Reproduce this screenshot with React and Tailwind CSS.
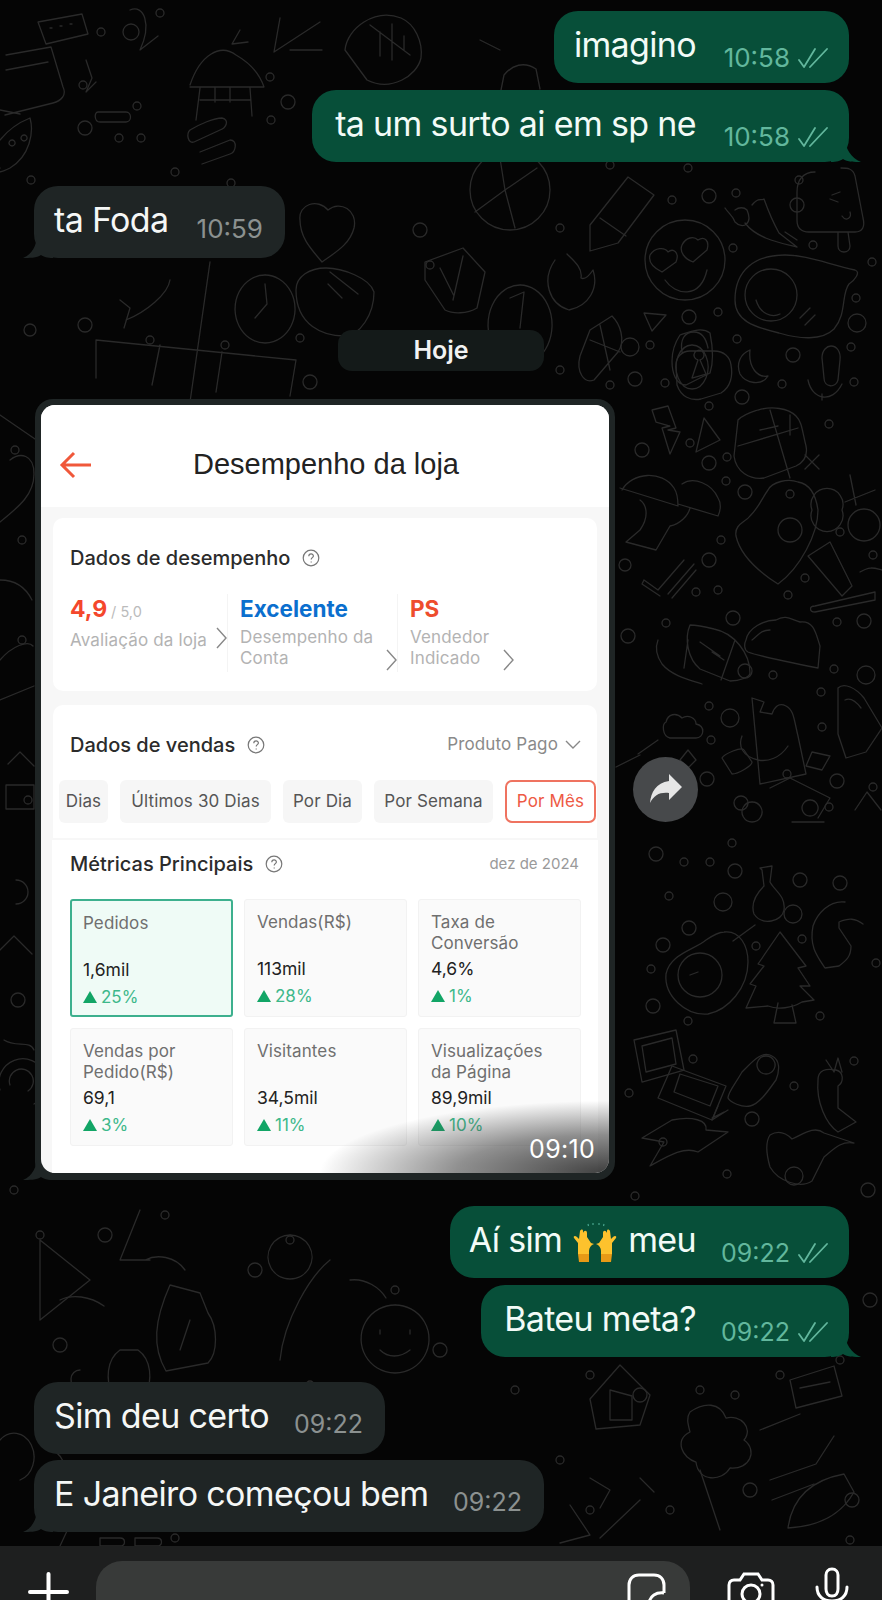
import React from 'react';

const dots = [
  [672,200,4],[709,196,7],[736,193,4],[797,205,7],[799,180,4],[813,245,4],[733,248,4],[872,262,4],[856,298,4],[857,323,9],[718,312,4],[689,317,7],[737,339,4],[793,355,7],[851,347,4],[782,384,4],[854,382,4],[742,397,7],[709,406,4],[630,347,9],[635,379,7],[665,383,4],[829,424,4],[690,443,4],[642,450,7],[727,457,4],[709,463,7],
  [726,481,4],[745,492,7],[790,494,4],[721,540,4],[709,560,7],[625,565,6],[840,532,4],[873,555,4],[805,578,4],[788,595,4],[696,592,4],[718,590,4],[733,618,7],[666,623,4],[628,636,7],[837,622,4],[864,621,7],[745,671,7],[773,675,4],[834,669,4],[866,675,9],[821,692,4],[709,706,4],[730,718,9],[822,727,4],[711,740,4],[787,774,4],[837,781,7],[873,787,4],[707,779,7],[741,803,7],[829,807,4],
  [732,843,4],[656,854,7],[684,862,4],[710,862,4],[735,871,7],[800,880,7],[840,883,7],[669,896,4],[723,902,9],[793,914,9],[689,928,7],[802,939,4],[663,945,7],[756,946,4],[651,969,4],[876,963,4],[653,1006,7],[688,1021,4],[820,1016,4],[693,1059,4],[854,1061,4],[794,1086,4],[752,1119,7],[629,1093,4],[663,1142,4],[727,1174,4],[794,1176,9],[868,1190,7],[635,1196,4],
  [101,32,4],[131,32,8],[160,13,4],[83,85,4],[137,106,4],[85,128,7],[119,138,4],[141,138,4],[270,77,4],[288,102,7],[271,120,4],[175,172,4],[31,180,4],[231,183,4],[420,230,7],[430,265,4],[560,228,4],[610,165,4],[688,168,4],[30,330,6],[85,325,7],[150,340,4],[225,345,4],[300,338,4],[310,382,7],[560,370,4],[650,345,4],[610,385,4],
  [15,450,4],[22,540,4],[22,640,4],[28,800,4],[18,1000,7],[14,1190,4],[105,1235,7],[40,1235,4],[165,1215,4],[255,1270,7],[290,1240,4],[60,1345,7],[310,1385,4],[395,1290,4],[440,1350,7],[515,1390,4],[590,1375,4],[640,1395,7],[700,1390,4],[735,1395,4],[780,1375,4],[840,1360,4],[870,1300,7],[560,1460,4],[590,1510,4],[670,1510,4],[750,1490,7],[852,1500,7],[850,1540,4],[175,1538,4]
];

// background wallpaper doodles, roughly where they sit in the picture
const doodles = [
  // right column
  'M645 260a40 40 0 1 0 80 0a40 40 0 1 0 -80 0M650 255c5-8 15-8 18-3c5-4 12 0 8 10l-14 10c-8-4-14-10-12-17M682 245c4-8 12-9 16-5c6-4 12 0 9 10l-14 12c-8-3-14-10-11-17M665 280c10 15 35 20 42-10',
  'M815 172c-12 0-18 8-18 20v28c0 8 4 12 12 12h46c8 0 10-6 8-14l-8-42c-2-8-8-8-14-8M838 232v14c0 8 12 8 12 0l-2-14M832 195l8-3M838 202l-8-3M842 216c4 6 10 2 8-4',
  'M725 208c4 6 8 8 10 14c8 8 18 2 12-12c-3-3-8-3-12 0M752 205c6-8 8-4 12-6c5 14 10 25 15 34l18 14c-16-4-40-8-52-24M785 232l12 8',
  'M735 300c0-30 20-45 50-45c20 0 40 8 70 15c6 2 0 10-6 14c-8 10-2 30-15 45c-12 12-35 10-55 4c-25-6-44-12-44-33M745 295a26 26 0 1 0 52 0a26 26 0 1 0 -52 0M756 300c4 14 16 18 24 14M800 318l10-10M805 325l10-10',
  'M676 365c0-8 6-14 14-14h24c10 0 16 6 17 14c2 10 0 22-10 28l-20 6c-10 2-20-2-24-14zM682 352c-2-12 2-20 12-20c8 0 12 6 14 16M698 360a5 5 0 1 1 2 0l6 14l-14 4z',
  'M750 350c-10 4-14 14-10 24c6 10 22 12 28 2c-10 2-20-8-18-26',
  'M822 358c0-8 5-12 9-12c6 0 10 6 9 14l-2 20c-2 8-14 8-14-2zM808 380c4 20 24 24 34 4M822 400v-6',
  'M738 420c6-6 14-8 20-10c14-4 30-2 38 6c6 6 6 14 10 30c2 10-2 16-10 20l-32 12c-14 2-28-6-30-22zM770 410l20 68M738 446l60-18M760 430l18-4M790 415v20M805 455l14 14M805 469l14-14',
  'M652 410l16-4l8 22l-8 2l12 2l-10 22l-8-26l8-2l-14-4zM704 418l-8 34l24-12zM644 313l22 2l-14 16z',
  // middle right
  'M622 490c10-18 40-20 52-2c4 6 4 12 4 18l-58-18M682 484c12-8 30 0 36 14c4 6 2 14 0 18l-40-12M640 500c6 4 10 16 0 30l-14 12l30 8l14-24c10-2 18-10 20-18',
  'M768 490c4-8 20-12 30-8c12 2 18 14 20 28c0 24-18 58-40 74c-22-14-38-30-42-48c-2-12 10-14 14-20c10-10 12-18 18-26zM778 530a12 12 0 1 0 24 0a12 12 0 1 0 -24 0',
  'M842 510a16 16 0 1 0 -30 0a16 16 0 1 0 30 0M845 502l30-12M880 525a16 16 0 1 0 -32 0a16 16 0 1 0 32 0M850 475l6 30',
  'M808 556l22-14l22 44l-10 10zM815 606l60-14v8l-60 12c-6 0-6-6 0-6zM860 572c10-6 14-4 22-2',
  'M644 580l14 10l26-30M668 594l26-30M644 580l-2 4l18 12M672 598l24-28',
  'M690 625c-6 14-2 34 10 44l30 12c10 0 20-4 20-8c0-20-16-40-36-44c-8-2-20-4-24-4zM688 640l-4 28M712 652l12 8M700 642l20 14M735 640l-14 40M658 640c-4 10 0 18 4 24c10 12 28 16 40 20',
  'M746 640c2-12 18-20 30-20c10-6 16 0 24 2c14-2 16 12 20 24l-2 22c-30-6-60-12-70-16c-4-2-4-8-2-12zM752 640c6-4 8-10 18-10',
  'M752 698l12 4l-4 10l12 2c2-6 6-12 14-8c8 4 8 14 12 30l8 38l-46 10zM742 736c-4 10 0 20 16 24c10 2 22-2 30-14',
  'M838 688c6-6 18 0 26 10l18 30l-16 24l-20 6l-8-24zM845 700c4-2 10 0 16 8',
  'M666 722c2-8 10-10 16-4c6-4 14 0 14 6c10 2 8 14 0 14h-26c-8-2-8-14-4-16z',
  'M640 755l-24 12M658 740l-20 14M688 750l8 10l-8 8l-8-8z',
  'M722 758c2-4 20-12 22-8l8 12c0 4-14 12-20 12zM812 752l18 4l-8 14l-16-4zM792 822h32M770 788l20-10l40 20l-12 20M752 802a10 10 0 1 0 0.1 0M810 800a8 8 0 1 0 0.1 0',
  'M855 810l12-18l14 18',
  // lower right
  'M760 868l12-2l-2 16c4 8 16 14 14 28c-2 12-22 16-30 4c-4-12 4-22 10-28l-2-16zM755 925l-22 16',
  'M724 932c16-2 24 14 24 30c0 26-20 48-40 52c-22 2-44-18-42-40c4-20 28-24 40-34c6-4 12-8 18-8zM678 975a22 22 0 1 0 44 0a22 22 0 1 0 -44 0M690 975l8-3',
  'M780 932l26 34l-8 2l12 18l-10 0l14 14l-12 2c-10 6-24 8-34 4l-22 2l10-22l-6-2l14-18l-6-2zM792 1005l4 18h-22l4-20',
  'M845 902c-16-2-28 12-32 24c-4 20 4 30 12 42l14-2c8-6 12-10 12-20l-12-18l0-6c10-4 16-4 24 2',
  'M634 1040l42-10l8 40l-42 12zM642 1046l30-8l4 26l-30 8z',
  'M672 1066l54 20l-14 34l-54-22zM680 1074l38 12l-8 20l-36-14z',
  'M742 1072c-8 14-14 20-14 26c2 4 14 10 22 8c10-2 20-18 26-26c4-10 4-20-4-24c-10-6-20 6-30 16zM766 1056a9 9 0 1 0 0.1 0M728 1110l-16 10l6-14M712 1118l12-6',
  'M826 1060l8 12l4-14l4 14M818 1080c0-10 8-12 18-10c8 2 8 12 2 16l0 22l18 14l-18 10c-12-8-22-30-20-52z',
  'M770 1135c10-6 18 0 22 4c10-4 22-14 32-6l30 10c-14-2-20 6-30 14l-12 24c-12 8-34 0-42-14c-4-14-4-26 0-32z',
  'M672 1120c20-4 36 0 34 10l22 2l-30 20c-14-6-30 4-48 14l14-24l-22-4z',
  // left edge, next to the picture
  'M0 415l35 24M10 460c10-8 24-6 24 14c0 20-14 32-34 48M0 580c12 0 24 4 32 20M0 660c12-14 28-20 33-14M0 700l34-14M8 764l12-12l14 14M6 785h28v24h-28zM16 880a12 12 0 1 1 0 24M0 950l14-14l18 18M4 1040c12 8 26 0 30 10M0 1090a24 24 0 1 1 34 14M10 1085a12 12 0 1 1 18 6',
  // top band
  'M38 22l44-8l6 20l-42 10zM50 28h2M60 26h2M70 24h2',
  'M6 55l45-8l12 40c4 8-2 14-10 16l-48 12M0 110l20 4M6 70l42-8',
  'M130 10c14-6 22 14 10 40l18-14M86 60l6 18l-6 14l10-10',
  'M190 85c10-30 30-42 46-30c14 8 24 20 28 32l-74 0M200 88l-4 32M250 88l2 28M200 100h50M215 88v14M230 88v14M240 30l-8 14l16-2',
  'M0 140c8-10 20-18 30-22c4 14 0 38-20 50c-8 4-14 6-10 0M12 140a3 3 0 1 0 .1 0M24 135a3 3 0 1 0 .1 0',
  'M98 112h28c6 0 6 10 0 10h-26c-6 0-6-10-2-10zM190 130c10-6 24-12 32-12c8 2 4 10-2 12l-26 12c-6 2-8-8-4-12zM200 152l30-12c8 0 6 12 0 14l-28 10',
  'M345 50c2-22 30-42 56-32c14 6 22 24 20 40c-4 18-30 34-54 22zM370 25l40 30M380 32v24M392 24v36M404 36v14',
  'M480 40l20 10M280 18l-6 34l46-30M290 50h32M500 95l4-20c8-10 20-14 32-6l4 20',
  'M470 190a40 40 0 1 0 80 0a40 40 0 1 0 -80 0M505 190l-6-38M505 190l-30 22M505 190l32-22M505 190l10 38',
  'M590 225l38-48l26 18l-36 48l-28 8zM600 218l26 18',
  'M300 220c-2-16 18-22 28-10c12-10 30 0 26 18c-4 16-18 24-32 34c-10-12-22-24-22-42z',
  'M296 290c0-14 14-22 30-22c16 0 44 10 48 24c0 22-14 44-30 44c-20 0-48-10-48-46zM330 272l28 22M328 284l14 14',
  'M425 262l38-14l22 24l-8 36c-10 6-24 6-32 2l-20-30zM440 268l14 28M463 256l-10 44',
  'M555 260c-14 20-6 44 14 50c20-4 30-22 24-40c-4 6-8 10-12 8c2-10-8-18-14-24',
  'M520 285a32 40 0 1 0 .1 0M510 298l14-6l-4 36',
  'M265 275a30 34 0 1 0 .1 0M255 318l12-14l-2-20',
  'M96 340l200 20l-6 36M96 340l0 38M160 345l-8 40M222 352l-6 40M120 300l10 8l-6 20M126 320c20-8 42-26 44-40M210 262l-20 140',
  'M590 330l22-14c8 8 14 24 6 36l-24 28c-10 4-18-8-14-24zM590 340l30 12M600 325l10 45',
  'M680 335c12-4 22-8 30-2c2 10 4 28 0 40l-24 12c-10 0-14-12-14-24c0-10 4-20 8-26zM692 345a16 22 0 1 0 .1 0',
  // bottom band
  'M40 1240l50 40l-50 40zM40 1240l0 70M140 1210l-20 50l30 0M145 1260c12-6 30-4 40 10',
  'M170 1285l30 8l8 20c10 14 10 40 0 50l-42 8c-14-24-12-50 4-86zM190 1320l-10 30',
  'M290 1235a22 22 0 1 0 .1 0M330 1260c-20 16-46 60-50 100M350 1280c16-2 30 8 36 18',
  'M395 1305a34 34 0 1 0 .1 0M380 1330l0 4M410 1330l0 4M380 1350c8 8 20 8 30 0',
  'M120 1350c-14 10-14 30-8 44h34c6-14 6-34-8-44zM80 1370c-10 0-14 16 0 20M60 1300c12-6 30-4 44 6',
  'M620 1365l30 30l-10 30l-44 4l-6-30zM610 1390v30h22v-24z',
  'M790 1380l44-14l8 30l-46 12zM800 1388l30-6',
  'M690 1412c14-10 30-10 36 6c14-4 28 10 18 22c14 10 6 30-14 28c-8 14-32 14-34-6c-14-4-22-22-6-30c-2-8-4-14 0-20z',
  'M760 1430l40-16M770 1480l46-16l18-28M772 1500l42-16',
  'M788 1528c4-30 24-48 56-54l10 18c-10 18-30 34-66 36zM640 1500l-40 38M700 1470l20 60M570 1505l20 30l-30 8',
  'M640 1478l14 14M590 1478l20 12l-10 18',
  'M100 1538h20c6 0 6 8 0 8h-20zM135 1538h22c6 0 6 8 0 8h-22zM60 1546l14-30c10-6 22 0 22 8M50 1450c10 2 18 14 14 30M0 1440a20 24 0 1 1 20 40'
];

const WallPaper = () => (
  <svg className="absolute inset-0" width="882" height="1600" viewBox="0 0 882 1600" fill="none" stroke="#2a2a2a" strokeWidth="1.3" strokeLinecap="round" strokeLinejoin="round">
    {dots.map((d, i) => <circle key={i} cx={d[0]} cy={d[1]} r={d[2]} />)}
    {doodles.map((d, i) => <path key={i} d={d} />)}
  </svg>
);

const Ticks = () => (
  <svg width="30" height="20" viewBox="0 0 30 20" fill="none" stroke="#62b79d" strokeWidth="1.8" strokeLinecap="round" strokeLinejoin="round" className="shrink-0">
    <path d="M1 12l5 7L17 1M12 19L29 1" />
  </svg>
);

const Hands = () => (
  <svg width="44" height="42" viewBox="0 0 44 42" className="shrink-0 mx-[11px] mb-[-3px]">
    <path d="M15 3l.5 2M20 2v2M26 2v2M31 3l-.5 2" stroke="#4aa58e" strokeWidth="1.2" fill="none" />
    <path d="M7 10c1-2 3-2 3 0l0 2c1-3 4-3 4 0v4l4 6l3 1c-3 1-5 4-5 7v3H5L5 22l-4-5c-1-2 1-3 3-1l2 2z" fill="#fdc22d" />
    <path d="M37 10c-1-2-3-2-3 0v2c-1-3-4-3-4 0v4l-4 6l-3 1c3 1 5 4 5 7v3h11l0-11l4-5c1-2-1-3-3-1l-2 2z" fill="#fdc22d" />
    <path d="M5 33h11v8H6zM39 33H28v8h10z" fill="#e89a16" />
  </svg>
);

const Sent = ({ width, time, tail, children, timeSize = 'text-[26px]' }) => (
  <div className={`relative self-end mr-[33px] h-[72px] bg-[#074f39] rounded-[24px] flex items-center pl-[22px] pr-[21px] ${width}`}>
    <div className="flex-1 min-w-0 flex items-center justify-end pb-[4px] text-[34px] text-[#f2fbf7] leading-none tracking-[-0.65px] whitespace-nowrap">{children}</div>
    <div className={`ml-[28px] mt-[22px] w-[104px] shrink-0 flex items-center justify-end gap-[8px] leading-none text-[#62b79d] ${timeSize}`}>
      <span>{time}</span>
      <Ticks />
    </div>
    {tail && (
      <svg width="30" height="24" viewBox="0 0 30 24" className="absolute right-[-12px] bottom-0" fill="#074f39">
        <path d="M0 24V0h14c0 10 6 20 16 24c-6 0-14 0-18-3c-3 2-6 3-12 3z" />
      </svg>
    )}
  </div>
);

const Received = ({ width, time, tail, children, timeSize = 'text-[26px]' }) => (
  <div className={`relative self-start ml-[34px] h-[72px] bg-[#1f2525] rounded-[24px] flex items-center pl-[20px] ${width}`}>
    <div className="pb-[4px] text-[34px] text-[#f5f7f6] leading-none tracking-[-0.65px] whitespace-nowrap">{children}</div>
    <div className={`absolute right-[22px] top-[30px] leading-none text-[#8b9190] ${timeSize}`}>{time}</div>
    {tail && (
      <svg width="30" height="24" viewBox="0 0 30 24" className="absolute left-[-11px] bottom-0" fill="#1f2525">
        <path d="M30 24V0H14c0 10-4 20-14 24c6 0 14 0 18-3c3 2 6 3 12 3z" />
      </svg>
    )}
  </div>
);

const Help = () => (
  <svg width="18" height="18" viewBox="0 0 18 18" fill="none" stroke="#777" strokeWidth="1.2" className="shrink-0">
    <circle cx="9" cy="9" r="7.8" />
    <path d="M6.8 7.2c0-3 4.6-3 4.6-.2c0 1.6-2.2 1.7-2.2 3.4M9.2 12.6v.8" />
  </svg>
);

const Chevron = ({ className }) => (
  <svg width="11" height="22" viewBox="0 0 11 22" fill="none" stroke="#888" strokeWidth="1.4" className={className}>
    <path d="M1 1l9 10L1 21" />
  </svg>
);

const metrics = [
  { label: 'Pedidos', value: '1,6mil', delta: '25%', active: true },
  { label: 'Vendas(R$)', value: '113mil', delta: '28%' },
  { label: 'Taxa de Conversão', value: '4,6%', delta: '1%' },
  { label: 'Vendas por Pedido(R$)', value: '69,1', delta: '3%' },
  { label: 'Visitantes', value: '34,5mil', delta: '11%' },
  { label: 'Visualizações da Página', value: '89,9mil', delta: '10%' }
];

const tabs = [
  { label: 'Dias', w: 'w-[49px]' },
  { label: 'Últimos 30 Dias', w: 'w-[151px]' },
  { label: 'Por Dia', w: 'w-[79px]' },
  { label: 'Por Semana', w: 'w-[119px]' }
];

const StorePanel = () => (
  <div className="relative w-[568px] h-[768px] rounded-[14px] overflow-hidden bg-[#f7f7f7]">
    {/* header */}
    <div className="relative h-[102px] bg-white flex items-center justify-center pt-[18px]">
      <svg width="34" height="28" viewBox="0 0 34 28" fill="none" stroke="#f0583a" strokeWidth="3" className="absolute left-[18px] top-[46px]">
        <path d="M32 14H3M15 2L3 14l12 12" />
      </svg>
      <span className="font-['Liberation_Sans',sans-serif] text-[29px] text-[#222] pl-[2px]">Desempenho da loja</span>
    </div>

    {/* dados de desempenho */}
    <div className="mx-[12px] mt-[11px] h-[173px] bg-white rounded-[10px] pl-[17px] pt-[28px]">
      <div className="flex items-center gap-[12px] h-[24px]">
        <span className="text-[20px] font-medium text-[#2b2b2b]">Dados de desempenho</span>
        <Help />
      </div>
      <div className="flex mt-[24px]">
        <div className="relative w-[158px] h-[78px] border-r border-[#f4f4f4]">
          <div className="leading-[30px]"><span className="text-[23px] font-bold text-[#f4472c]">4,9</span><span className="text-[14.5px] text-[#bbb] ml-[4px]">/ 5,0</span></div>
          <div className="text-[17px] leading-[21px] text-[#b3b3b3] mt-[3px] tracking-[0.15px]">Avaliação da loja</div>
          <Chevron className="absolute left-[146px] top-[33px]" />
        </div>
        <div className="relative w-[170px] h-[78px] pl-[12px] border-r border-[#f4f4f4]">
          <div className="leading-[30px] text-[22.5px] font-bold text-[#0b6fce]">Excelente</div>
          <div className="text-[17px] leading-[21px] text-[#b3b3b3] mt-[3px] tracking-[0.15px]">Desempenho da<br />Conta</div>
          <Chevron className="absolute left-[158px] top-[55px]" />
        </div>
        <div className="relative flex-1 h-[78px] pl-[12px]">
          <div className="leading-[30px] text-[22.5px] font-bold text-[#ee4d2d]">PS</div>
          <div className="text-[17px] leading-[21px] text-[#b3b3b3] mt-[3px] tracking-[0.15px]">Vendedor<br />Indicado</div>
          <Chevron className="absolute left-[105px] top-[55px]" />
        </div>
      </div>
    </div>

    {/* dados de vendas */}
    <div className="mx-[12px] mt-[14px] bg-white rounded-t-[10px] h-[133px]">
      <div className="flex items-center pl-[17px] pr-[16px] pt-[28px] h-[52px]">
        <span className="text-[20px] font-medium text-[#2b2b2b]">Dados de vendas</span>
        <span className="ml-[12px]"><Help /></span>
        <span className="ml-auto text-[17px] text-[#8a8a8a] tracking-[0.15px]">Produto Pago</span>
        <svg width="16" height="10" viewBox="0 0 16 10" fill="none" stroke="#888" strokeWidth="1.4" className="ml-[7px]"><path d="M1 1l7 7 7-7" /></svg>
      </div>
      <div className="flex gap-[12px] mt-[23px] pl-[6px]">
        {tabs.map(t => (
          <div key={t.label} className={`h-[43px] rounded-[6px] bg-[#f6f6f6] flex items-center justify-center text-[17px] text-[#555] tracking-[0.15px] whitespace-nowrap ${t.w}`}>{t.label}</div>
        ))}
        <div className="w-[91px] h-[43px] rounded-[7px] border-2 border-[#ef7360] flex items-center justify-center text-[17px] text-[#ee5a45] tracking-[0.15px] whitespace-nowrap">Por Mês</div>
      </div>
    </div>

    {/* metricas principais */}
    <div className="mx-[11px] mt-[2px] bg-white h-[340px] pl-[18px] pr-[17px] pt-[12px]">
      <div className="flex items-center h-[24px]">
        <span className="text-[20px] font-medium text-[#2b2b2b]">Métricas Principais</span>
        <span className="ml-[12px]"><Help /></span>
        <span className="ml-auto mr-[2px] text-[15px] text-[#9a9a9a]">dez de 2024</span>
      </div>
      <div className="grid grid-cols-3 gap-[11px] mt-[23px]">
        {metrics.map(m => (
          <div key={m.label} className={`h-[118px] pt-[12px] rounded-[3px] flex flex-col ${m.active ? 'px-[11px] bg-[#effbf6] border-2 border-[#3db08e]' : 'px-[12px] bg-[#fafafa] border border-[#f2f2f2]'}`}>
            <div className="h-[44px] pr-[8px] text-[17px] leading-[21px] text-[#6f6f6f] tracking-[0.1px]">{m.label}</div>
            <div className="text-[17.5px] leading-[24px] text-[#222] mt-[1px]">{m.value}</div>
            <div className="flex items-center gap-[4px] text-[17px] leading-[24px] text-[#3db88a] mt-[3px]">
              <span className="w-0 h-0 border-l-[7px] border-r-[7px] border-b-[12px] border-l-transparent border-r-transparent border-b-[#12a566]" />
              {m.delta}
            </div>
          </div>
        ))}
      </div>
    </div>

    {/* shadow behind the time */}
    <div className="absolute right-0 bottom-0 w-[340px] h-[85px] bg-[radial-gradient(ellipse_100%_100%_at_100%_100%,rgba(30,30,30,0.85),rgba(70,70,70,0.6)_45%,rgba(255,255,255,0)_85%)]" />
    <span className="absolute right-[14px] bottom-[11px] text-[25px] leading-none text-white tracking-[0.3px]">09:10</span>
  </div>
);

export default function App() {
  return (
    <div className="relative w-[882px] h-[1600px] overflow-hidden bg-[#050505] font-['Inter',sans-serif]">
      <WallPaper />
      <div className="relative flex flex-col h-full pt-[11px]">
        <Sent width="w-[295px]" time="10:58">imagino</Sent>
        <div className="h-[7px] shrink-0" />
        <Sent width="w-[537px]" time="10:58" tail>ta um surto ai em sp ne</Sent>
        <div className="h-[24px] shrink-0" />
        <Received width="w-[251px]" time="10:59" tail>ta Foda</Received>

        <div className="self-start ml-[338px] mt-[72px] w-[206px] h-[41px] rounded-[14px] bg-[#141a19] flex items-center justify-center text-[25px] font-semibold text-[#f2f2f2]">Hoje</div>

        <div className="flex items-center mt-[28px] self-start ml-[35px]">
          <div className="relative bg-[#1f2525] rounded-[18px] w-[580px] h-[781px] pl-[6px] pt-[6px]">
            <svg width="30" height="24" viewBox="0 0 30 24" className="absolute left-[-12px] bottom-0" fill="#1f2525">
              <path d="M30 24V0H14c0 10-4 20-14 24c6 0 14 0 18-3c3 2 6 3 12 3z" />
            </svg>
            <StorePanel />
          </div>
          <div className="ml-[18px] w-[65px] h-[65px] rounded-full bg-[#47494b] flex items-center justify-center">
            <svg width="65" height="65" viewBox="0 0 65 65" fill="#e6e6e6">
              <path d="M36 17l13 13l-13 13v-7c-9-1-15 2-19 10c1-11 6-20 19-22z" />
            </svg>
          </div>
        </div>

        <div className="h-[26px] shrink-0" />
        <Sent width="w-[399px]" time="09:22" timeSize="text-[25px]">
          <span>Aí sim</span><Hands /><span>meu</span>
        </Sent>
        <div className="h-[7px] shrink-0" />
        <Sent width="w-[368px]" time="09:22" timeSize="text-[25px]" tail>Bateu meta?</Sent>
        <div className="h-[25px] shrink-0" />
        <Received width="w-[351px]" time="09:22" timeSize="text-[25px]">Sim deu certo</Received>
        <div className="h-[6px] shrink-0" />
        <Received width="w-[510px]" time="09:22" timeSize="text-[25px]" tail>E Janeiro começou bem</Received>

        {/* input bar, runs off the bottom of the shot */}
        <div className="mt-auto h-[54px] shrink-0 overflow-hidden bg-[#1e1f1f] flex items-start pl-[28px]">
          <svg width="41" height="28" viewBox="0 0 41 28" fill="none" stroke="#fff" strokeWidth="4" strokeLinecap="round" className="mt-[26px] shrink-0">
            <path d="M20.5 2v26M2 20h37" />
          </svg>
          <div className="ml-[27px] mt-[15px] w-[594px] h-[70px] rounded-[26px] bg-[#383a39] relative">
            <svg width="40" height="30" viewBox="0 0 40 30" fill="none" stroke="#fff" strokeWidth="3" className="absolute left-[531px] top-[12px]">
              <path d="M2 30V12C2 6 6 2 12 2h15c6 0 10 4 10 10v8M37 20c-8-1-14 3-15 10" />
            </svg>
          </div>
          <svg width="50" height="30" viewBox="0 0 50 30" fill="none" stroke="#fff" strokeWidth="3" className="ml-[36px] mt-[26px] shrink-0">
            <path d="M3 30V13c0-3 2-5 5-5h6l4-6h14l4 6h6c3 0 5 2 5 5v17" />
            <circle cx="25" cy="22" r="9" />
            <circle cx="36" cy="13" r="1.5" fill="#fff" stroke="none" />
          </svg>
          <svg width="34" height="34" viewBox="0 0 34 34" fill="none" stroke="#fff" strokeWidth="3" strokeLinecap="round" className="ml-[39px] mt-[21px] shrink-0">
            <path d="M17 2c-4 0-6 3-6 6v14c0 4 2 7 6 7s6-3 6-7V8c0-3-2-6-6-6zM2 20c0 9 6 14 15 14s15-5 15-14" />
          </svg>
        </div>
      </div>
    </div>
  );
}
